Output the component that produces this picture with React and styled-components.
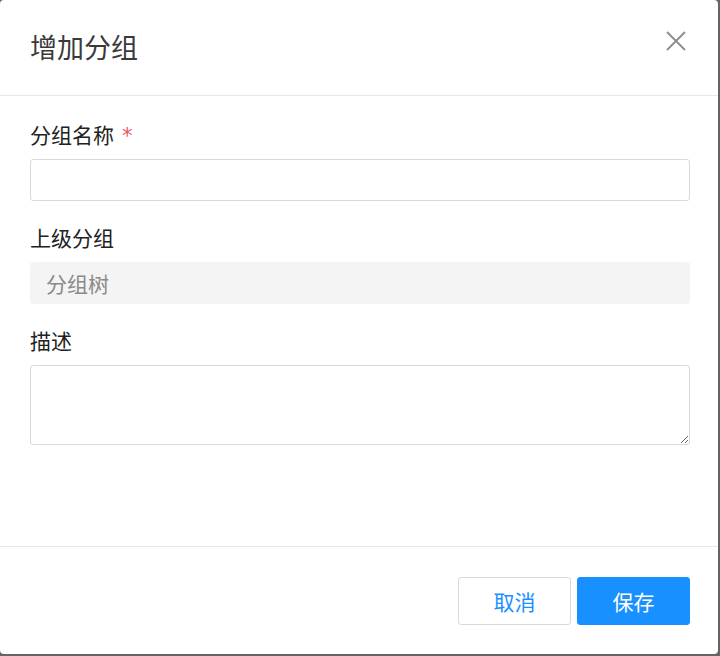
import React from "react"
import styled, { createGlobalStyle } from "styled-components"

const GlobalStyle = createGlobalStyle`
  html, body {
    margin: 0;
    padding: 0;
    background: #646464;
  }
  body {
    font-family: "Noto Sans CJK SC", "Noto Sans", sans-serif;
  }
  * {
    box-sizing: border-box;
  }
`

const App = () => {
  return (
    <>
      <GlobalStyle />
      <Modal>
        <Header>
          <Title>增加分组</Title>
          <CloseButton aria-label="close">
            <svg width="20" height="20" viewBox="0 0 20 20">
              <path d="M1 1 L19 19 M19 1 L1 19" stroke="#8c8c8c" strokeWidth="1.8" fill="none" />
            </svg>
          </CloseButton>
        </Header>
        <Body>
          <Field>
            <Label>
              分组名称<Required>*</Required>
            </Label>
            <Input type="text" />
          </Field>
          <Field>
            <Label>上级分组</Label>
            <Input type="text" placeholder="分组树" disabled />
          </Field>
          <Field>
            <Label>描述</Label>
            <TextArea />
          </Field>
        </Body>
        <Footer>
          <Button>取消</Button>
          <Button primary="true">保存</Button>
        </Footer>
      </Modal>
    </>
  )
}

export default App

const Modal = styled.div`
  width: 718px;
  height: 654px;
  background: #fff;
  border-radius: 4px;
  display: flex;
  flex-direction: column;
  overflow: hidden;
`

const Header = styled.div`
  height: 96px;
  flex-shrink: 0;
  display: flex;
  align-items: center;
  justify-content: space-between;
  padding: 0 32px 2px 30px;
  border-bottom: 1px solid #e8e8e8;
`

const Title = styled.h1`
  margin: 0;
  font-size: 27px;
  font-weight: 400;
  color: #3a3a3a;
  line-height: 1;
`

const CloseButton = styled.button`
  border: none;
  background: transparent;
  padding: 0;
  width: 20px;
  height: 20px;
  margin-top: -12px;
  display: flex;
  cursor: pointer;
`

const Body = styled.div`
  flex: 1;
  padding: 22px 28px 0 30px;
`

const Field = styled.div`
  display: flex;
  flex-direction: column;
  margin-bottom: 20px;
`

const Label = styled.label`
  font-size: 21px;
  line-height: 32px;
  height: 32px;
  color: #222;
  margin-bottom: 9px;
`

const Required = styled.span`
  color: #f5505a;
  margin-left: 8px;
  font-family: "DejaVu Sans", sans-serif;
  font-size: 21px;
`

const Input = styled.input`
  width: 100%;
  height: 42px;
  border: 1px solid #d9d9d9;
  border-radius: 3px;
  padding: 0 15px;
  font-size: 21px;
  font-family: inherit;
  color: #333;
  outline: none;

  &:disabled {
    background: #f4f4f4;
    border-color: #f4f4f4;
  }

  &::placeholder {
    color: #8a8a8a;
  }
`

const TextArea = styled.textarea`
  width: 100%;
  height: 80px;
  border: 1px solid #d9d9d9;
  border-radius: 3px;
  padding: 8px 15px;
  font-size: 21px;
  font-family: inherit;
  outline: none;
  display: block;
`

const Footer = styled.div`
  height: 108px;
  flex-shrink: 0;
  border-top: 1px solid #e8e8e8;
  display: flex;
  justify-content: flex-end;
  align-items: flex-start;
  gap: 6px;
  padding: 30px 28px 0 0;
`

const Button = styled.button`
  width: 113px;
  height: 48px;
  border-radius: 3px;
  font-size: 21px;
  font-family: inherit;
  cursor: pointer;
  border: 1px solid ${({ primary }) => (primary ? "#1890ff" : "#d9d9d9")};
  background: ${({ primary }) => (primary ? "#1890ff" : "#fff")};
  color: ${({ primary }) => (primary ? "#fff" : "#1890ff")};
`
